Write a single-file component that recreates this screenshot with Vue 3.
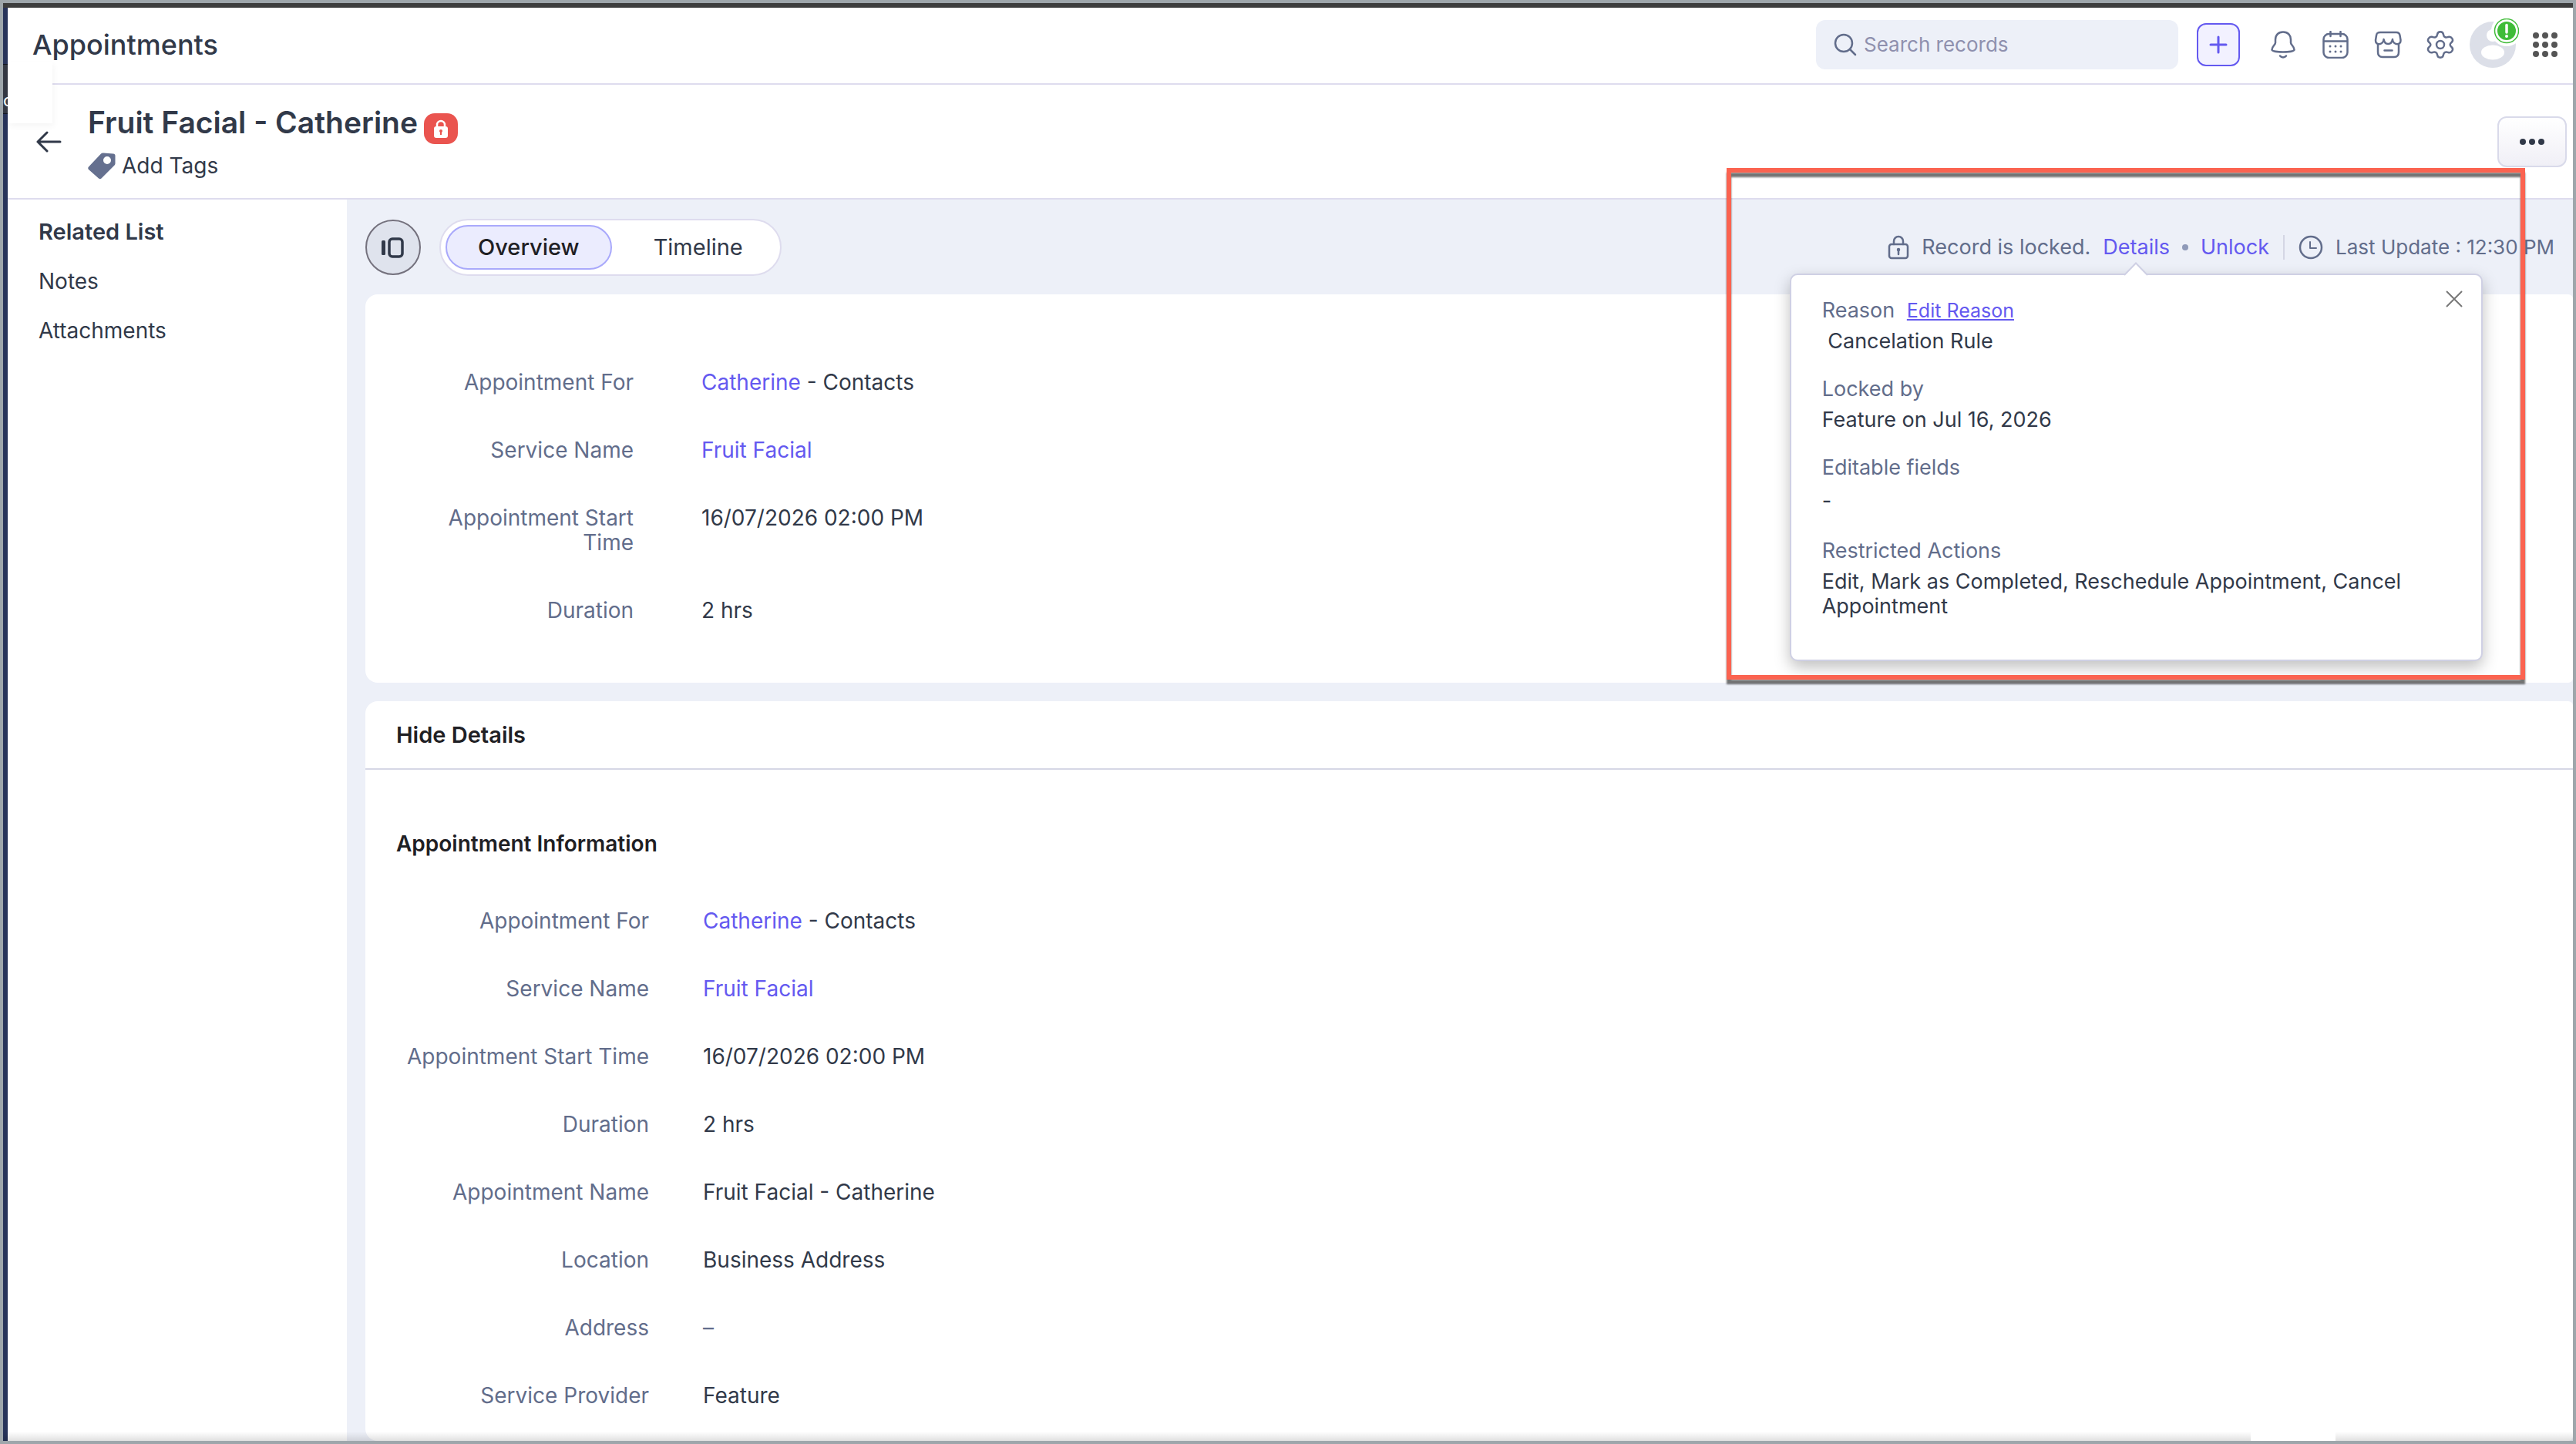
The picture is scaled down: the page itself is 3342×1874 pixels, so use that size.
<script setup>
import { ref } from 'vue'

const showDetails = ref(true)
const tab = ref('Overview')

const summary = [
  { label: 'Appointment For', link: 'Catherine', text: ' - Contacts' },
  { label: 'Service Name', link: 'Fruit Facial' },
  { label: 'Appointment Start Time', text: '16/07/2026 02:00 PM' },
  { label: 'Duration', text: '2 hrs' },
]

const information = [
  ...summary,
  { label: 'Appointment Name', text: 'Fruit Facial - Catherine' },
  { label: 'Location', text: 'Business Address' },
  { label: 'Address', text: '–', empty: true },
  { label: 'Service Provider', text: 'Feature' },
]
</script>

<template>
  <div class="app">
    <div class="rail" aria-hidden="true"><span class="rail-item">c</span></div>

    <div class="page">
      <header class="topbar">
        <h1 class="module">Appointments</h1>
        <label class="search">
          <svg class="icon" viewBox="0 0 32 32" width="32" height="32" aria-hidden="true">
            <circle cx="14" cy="14" r="11" /><path d="M22 22l7 7" />
          </svg>
          <input type="search" placeholder="Search records" aria-label="Search records" />
        </label>
        <button class="create" aria-label="Create">
          <svg viewBox="0 0 24 24" width="24" height="24"><path d="M12 2v20M2 12h20" /></svg>
        </button>
        <nav class="tools">
          <button aria-label="Notifications">
            <svg class="icon" viewBox="0 0 36 36" width="36" height="36">
              <path d="M18 1.500C11.500 1.500 8 6 8 11.500v4c0 3-4.500 4.500-4.500 9 0 4 29 4 29 0 0-4.500-4.500-6-4.500-9v-4C28 6 24.500 1.500 18 1.500z" />
              <path d="M14 32.500c2 2.500 6 2.500 8 0" />
            </svg>
          </button>
          <button aria-label="Calendar">
            <svg class="icon" viewBox="0 0 36 36" width="36" height="36">
              <rect x="2.500" y="4" width="31" height="31" rx="7" /><path d="M3 13.500h30M11.500 1v6M24.500 1v6" />
              <path class="dots" d="M11 20h0M18 20h0M25 20h0M11 27h0M18 27h0M25 27h0" />
            </svg>
          </button>
          <button aria-label="Marketplace">
            <svg class="icon" viewBox="0 0 36 36" width="36" height="36">
              <path d="M8 2h21c3 0 4 1 4.500 4l1 6c.5 7-8.500 7-10.500 0v-1c-1.500 8-10 8-11.500 0v1C10.500 19 1.500 19 2 12l1-6c.5-3 1.500-4 5-4z" />
              <path d="M5 17.500v10c0 4.500 2 6.500 6 6.500h15c4 0 6-2 6-6.500v-10M13.500 25.500h10" />
            </svg>
          </button>
          <button aria-label="Settings">
            <svg class="icon" viewBox="0 0 36 36" width="36" height="36">
              <path d="M14 5c.5-5 7.500-5 8 0 .5 3 3 4.500 6 3 4.500-1.500 8 4 4.500 7-2.500 2-2.500 4 0 6 3.500 3-0 8.500-4.500 7-3-1.500-5.500 0-6 3-.5 5-7.500 5-8 0-.5-3-3-4.500-6-3-4.500 1.500-8-4-4.500-7 2.500-2 2.500-4 0-6-3.500-3 0-8.500 4.500-7 3 1.500 5.500 0 6-3z" />
              <circle cx="18" cy="18" r="5" />
            </svg>
          </button>
        </nav>
        <button class="avatar" aria-label="Profile">
          <svg viewBox="0 0 64 64" width="64" height="64">
            <circle cx="30" cy="34" r="30" fill="#dcdfe8" />
            <ellipse cx="30" cy="44" rx="15" ry="9.500" fill="#fff" />
            <circle cx="30" cy="22" r="8" fill="#fff" />
            <circle cx="48" cy="16" r="20" fill="#fff" />
            <circle cx="48" cy="16" r="15.500" fill="#fff" stroke="#3fbc38" stroke-width="1.500" />
            <circle cx="48" cy="16" r="12" fill="#3fbc38" />
            <path d="M48 8.500v9.500" stroke="#fff" stroke-width="3.500" stroke-linecap="round" />
            <circle cx="48" cy="23" r="2" fill="#fff" />
          </svg>
        </button>
        <button class="apps" aria-label="All apps">
          <svg viewBox="0 0 32 32" width="32" height="32" fill="#555">
            <template v-for="y in [4, 16, 28]" :key="y">
              <circle v-for="x in [4, 16, 28]" :key="x" :cx="x" :cy="y" r="4" />
            </template>
          </svg>
        </button>
      </header>

      <section class="record">
        <button class="back" aria-label="Back">
          <svg viewBox="0 0 34 28" width="34" height="28"><path d="M15 2L3 14l12 12M3 14h29" /></svg>
        </button>
        <div class="record-name">
          <div class="name-row">
            <h2>Fruit Facial - Catherine</h2>
            <span class="locked" aria-label="Locked">
              <svg viewBox="0 0 24 26" width="24" height="26" aria-hidden="true">
                <path d="M7 10V8a5 5 0 0 1 10 0v2" fill="none" stroke="#fff" stroke-width="2.500" />
                <rect x="3" y="10" width="18" height="15" rx="3" fill="#fff" />
                <circle cx="12" cy="16" r="2" fill="#ea544f" /><path d="M12 16v5" stroke="#ea544f" stroke-width="2" />
              </svg>
            </span>
          </div>
          <button class="tags">
            <svg viewBox="0 0 36 36" width="36" height="36" aria-hidden="true">
              <path fill="#65708f" fill-rule="evenodd" d="M20 1.500l13 1c1.500 0 2.500 1 2.500 2.500V15c0 1-.5 2-1 2.500L17.500 34.500c-1 1-2.500 1-3.500 0L1 23c-1-1-1-2.500 0-3.500L17 2.500c1-.8 2-1.100 3-1zM25 6a5 5 0 1 0 0 10a5 5 0 0 0 0-10z" />
            </svg>
            Add Tags
          </button>
        </div>
        <button class="more" aria-label="More actions">
          <svg viewBox="0 0 32 8" width="32" height="8" fill="#313949">
            <circle cx="4" cy="4" r="4" /><circle cx="16" cy="4" r="4" /><circle cx="28" cy="4" r="4" />
          </svg>
        </button>
      </section>

      <div class="body">
        <aside class="related">
          <h3>Related List</h3>
          <a href="#notes">Notes</a>
          <a href="#attachments">Attachments</a>
        </aside>

        <main class="content">
          <div class="toolbar">
            <button class="toggle" aria-label="Toggle related list">
              <svg viewBox="0 0 30 28" width="30" height="28">
                <rect x="0" y="5" width="5" height="19" rx="1.500" fill="#313949" />
                <rect x="10" y="3" width="17" height="23" rx="4" fill="none" stroke="#313949" stroke-width="3.500" />
              </svg>
            </button>
            <div class="tabs" role="tablist">
              <button
                v-for="name in ['Overview', 'Timeline']" :key="name" role="tab"
                :aria-selected="tab === name" :class="{ active: tab === name }" @click="tab = name"
              >{{ name }}</button>
            </div>

            <div class="status">
              <svg class="icon" viewBox="0 0 28 32" width="28" height="32" aria-hidden="true">
                <rect x="2" y="12" width="24" height="18" rx="3" />
                <path d="M8 12V8a6 6 0 0 1 12 0v4M14 19v6" /><circle cx="14" cy="19" r="1" />
              </svg>
              <span>Record is locked.</span>
              <div class="details-anchor">
                <a href="#details" @click.prevent="showDetails = !showDetails">Details</a>
                <div v-if="showDetails" class="popover" role="dialog" aria-label="Lock details">
                  <svg class="tip" viewBox="0 0 32 18" width="32" height="18" aria-hidden="true">
                    <path d="M1 17L16 1.500L31 17V18H1z" fill="#fff" /><path d="M1 17L16 1.500L31 17" fill="none" stroke="#cfd0e4" stroke-width="2" />
                  </svg>
                  <button class="close" aria-label="Close" @click="showDetails = false">
                    <svg viewBox="0 0 22 22" width="22" height="22"><path d="M1 1l20 20M21 1L1 21" /></svg>
                  </button>
                  <dl>
                    <div>
                      <dt>Reason <a href="#edit-reason">Edit Reason</a></dt>
                      <dd>&nbsp;Cancelation Rule</dd>
                    </div>
                    <div>
                      <dt>Locked by</dt>
                      <dd>Feature on Jul 16, 2026</dd>
                    </div>
                    <div>
                      <dt>Editable fields</dt>
                      <dd class="none">-</dd>
                    </div>
                    <div>
                      <dt>Restricted Actions</dt>
                      <dd>Edit, Mark as Completed, Reschedule Appointment, Cancel Appointment</dd>
                    </div>
                  </dl>
                </div>
              </div>
              <i class="bullet"></i>
              <a href="#unlock">Unlock</a>
              <i class="divider"></i>
              <svg class="icon" viewBox="0 0 32 32" width="32" height="32" aria-hidden="true">
                <circle cx="16" cy="16" r="14" /><path class="hands" d="M15 9v8h8" />
              </svg>
              <span class="updated">Last Update : 12:30 PM</span>
            </div>
          </div>

          <section class="card summary">
            <dl class="fields">
              <div v-for="f in summary" :key="f.label" class="field">
                <dt>{{ f.label }}</dt>
                <dd><a v-if="f.link" href="#record">{{ f.link }}</a>{{ f.text }}</dd>
              </div>
            </dl>
          </section>

          <section class="card info">
            <button class="hide">Hide Details</button>
            <h3>Appointment Information</h3>
            <dl class="fields">
              <div v-for="f in information" :key="f.label" class="field">
                <dt>{{ f.label }}</dt>
                <dd :class="{ empty: f.empty }"><a v-if="f.link" href="#record">{{ f.link }}</a>{{ f.text }}</dd>
              </div>
            </dl>
          </section>
        </main>
      </div>
    </div>

    <div class="flyout" aria-hidden="true"></div>
    <div class="highlight" aria-hidden="true"></div>
    <div class="bottom-shade" aria-hidden="true"><i></i><b></b></div>
  </div>
</template>

<style>
body {
  margin: 0;
}
</style>

<style scoped>
* {
  box-sizing: border-box;
}

.app {
  position: relative;
  display: flex;
  min-height: 100vh;
  border: 4px solid #9ea6ab;
  background: #fff;
  color: #313949;
  font: 28px/32px Inter, "Liberation Sans", sans-serif;
}

.app::before {
  content: "";
  position: absolute;
  inset: 0 0 auto;
  height: 6px;
  background: #3d3d3d;
}

h1, h2, h3, dl, dd {
  margin: 0;
}

button {
  padding: 0;
  border: 0;
  background: none;
  color: inherit;
  font: inherit;
  cursor: pointer;
}

svg {
  display: block;
  flex: none;
}

a {
  color: #6459f0;
  text-decoration: none;
}

.icon {
  fill: none;
  stroke: #626d8b;
  stroke-width: 2.5;
  stroke-linecap: round;
  stroke-linejoin: round;
}

.rail {
  flex: none;
  width: 6px;
  padding-top: 79px;
  background: #27335a;
}

.rail-item {
  display: block;
  height: 65px;
  padding-top: 30px;
  border: solid #11141f;
  border-width: 1px 0;
  background: #343843;
  color: #fff;
  font-size: 22px;
  line-height: 32px;
}

.page {
  display: flex;
  flex: 1;
  flex-direction: column;
  min-width: 0;
  padding-top: 6px;
}

.topbar {
  display: flex;
  align-items: center;
  height: 100px;
  padding: 0 20px 2px 32px;
  border-bottom: 2px solid #dedcee;
}

.module {
  flex: 1;
  font-size: 36px;
  font-weight: 500;
  line-height: 48px;
}

.search {
  display: flex;
  align-items: center;
  gap: 8px;
  width: 470px;
  height: 64px;
  padding: 0 22px;
  border-radius: 12px;
  background: #edf0f8;
}

.search input {
  flex: 1;
  min-width: 0;
  padding: 0;
  border: 0;
  outline: 0;
  background: none;
  color: #313949;
  font: inherit;
  font-size: 26px;
}

.search input::placeholder {
  color: #8f90ae;
  opacity: 1;
}

.create {
  display: grid;
  place-items: center;
  width: 56px;
  height: 56px;
  margin: 0 38px 0 24px;
  border: 2px solid #6459f0;
  border-radius: 12px;
  background: #f2f1ff;
}

.create path {
  fill: none;
  stroke: #6459f0;
  stroke-width: 3;
  stroke-linecap: round;
}

.tools {
  display: flex;
  gap: 32px;
}

.dots {
  stroke-width: 3;
}

.avatar {
  margin: 0 18px 4px 20px;
}

.record {
  display: flex;
  align-items: center;
  height: 149px;
  padding: 0 8px 0 36px;
  border-bottom: 2px solid #dedcee;
}

.back path {
  fill: none;
  stroke: #313949;
  stroke-width: 3;
  stroke-linecap: round;
  stroke-linejoin: round;
}

.record-name {
  display: flex;
  flex: 1;
  flex-direction: column;
  align-items: flex-start;
  gap: 10px;
  margin-left: 34px;
}

.name-row {
  display: flex;
  align-items: flex-start;
  gap: 8px;
}

.record h2 {
  font-size: 39px;
  font-weight: 600;
  line-height: 48px;
}

.locked {
  display: grid;
  place-items: center;
  width: 44px;
  height: 40px;
  margin-top: 12px;
  border-radius: 14px;
  background: #ea544f;
}

.tags {
  display: flex;
  align-items: center;
  gap: 8px;
}

.more {
  display: grid;
  place-items: center;
  width: 90px;
  height: 66px;
  border: 2px solid #d9daea;
  border-radius: 12px;
  background: linear-gradient(#fff, #f0eff6);
}

.body {
  display: flex;
  flex: 1;
}

.related {
  display: flex;
  flex: none;
  flex-direction: column;
  width: 440px;
  padding: 10px 40px;
  line-height: 64px;
}

.related h3 {
  font-size: 29px;
  font-weight: 600;
}

.related a {
  color: inherit;
}

.content {
  display: flex;
  flex: 1;
  flex-direction: column;
  gap: 24px;
  min-width: 0;
  padding: 25px 0 0 24px;
  background: #edf0f8;
}

.toolbar {
  display: flex;
  align-items: center;
  gap: 24px;
  padding-right: 24px;
}

.toggle {
  display: grid;
  place-items: center;
  width: 72px;
  height: 72px;
  border: 2px solid #74717d;
  border-radius: 50%;
  background: #dfe3ed;
}

.tabs {
  display: flex;
  gap: 12px;
  height: 74px;
  padding: 6px;
  border: 2px solid #dedcee;
  border-radius: 37px;
  background: #fff;
  font-size: 29px;
}

.tabs button {
  padding: 0 40px;
  border: 2px solid transparent;
  border-radius: 29px;
}

.tabs .active {
  border-color: #a9a9fb;
  background: #ebecfe;
  color: #1f2024;
  font-weight: 500;
}

.status {
  display: flex;
  align-items: center;
  gap: 16px;
  margin-left: auto;
  color: #626d8b;
  font-size: 27px;
  white-space: nowrap;
}

.updated {
  font-size: 26px;
}

.hands {
  stroke-width: 2;
}

.bullet {
  width: 8px;
  height: 8px;
  border-radius: 50%;
  background: #8f9ab9;
}

.divider {
  width: 2px;
  height: 32px;
  margin: 0 2px;
  background: #d4d6e4;
}

.details-anchor {
  position: relative;
}

.popover {
  position: absolute;
  z-index: 2;
  top: 50px;
  left: 50%;
  width: 899px;
  margin-left: -450px;
  padding: 30px 40px 53px;
  border: 2px solid #cfd0e4;
  border-radius: 10px;
  background: #fff;
  box-shadow: 0 8px 20px rgba(0, 0, 0, .25);
  white-space: normal;
}

.tip {
  position: absolute;
  top: -17px;
  left: 50%;
  margin-left: -16px;
}

.close {
  position: absolute;
  top: 20px;
  right: 24px;
}

.close path {
  fill: none;
  stroke: #777;
  stroke-width: 2;
}

.popover dl {
  display: flex;
  flex-direction: column;
  gap: 30px;
}

.popover dl div {
  display: flex;
  flex-direction: column;
  gap: 8px;
}

.popover dt a {
  margin-left: 8px;
  font-size: 25px;
  text-decoration: underline;
}

.popover dd {
  color: #313949;
}

.popover .none {
  line-height: 38px;
}

.card {
  border-radius: 16px 6px 6px 16px;
  background: #fff;
}

.summary {
  padding: 98px 0 78px 88px;
}

.fields {
  display: flex;
  flex-direction: column;
  gap: 56px;
}

.field {
  display: flex;
  gap: 88px;
}

.field dt {
  flex: none;
  width: 260px;
  color: #626d8b;
  text-align: right;
}

.field dd.empty {
  color: #626d8b;
}

.info {
  flex: 1;
  padding-bottom: 43px;
}

.hide {
  display: block;
  width: 100%;
  height: 89px;
  padding-left: 40px;
  border-bottom: 2px solid #d6d7e5;
  color: #1f2024;
  font-size: 29px;
  font-weight: 600;
  text-align: left;
}

.info h3 {
  padding: 80px 40px 68px;
  color: #1f2024;
  font-size: 28px;
  font-weight: 600;
}

.info .fields {
  padding-left: 28px;
}

.info .field {
  gap: 70px;
}

.info .field dt {
  width: 340px;
}

.flyout {
  position: absolute;
  top: 76px;
  left: 6px;
  width: 58px;
  height: 80px;
  background: #fff;
  box-shadow: 2px 4px 8px rgba(0, 0, 0, .04);
}

.highlight {
  position: absolute;
  z-index: 3;
  top: 214px;
  right: 62px;
  width: 1036px;
  height: 664px;
  border: 6px solid #fb6350;
  filter: drop-shadow(0 6px 1px rgba(0, 0, 0, .55));
  pointer-events: none;
}

.bottom-shade {
  position: absolute;
  right: 0;
  bottom: 0;
  left: 0;
  display: flex;
  gap: 110px;
  height: 12px;
}

.bottom-shade i,
.bottom-shade b {
  background: linear-gradient(transparent, rgba(0, 0, 0, .12));
}

.bottom-shade i {
  flex: 1;
}

.bottom-shade b {
  width: 308px;
}
</style>
